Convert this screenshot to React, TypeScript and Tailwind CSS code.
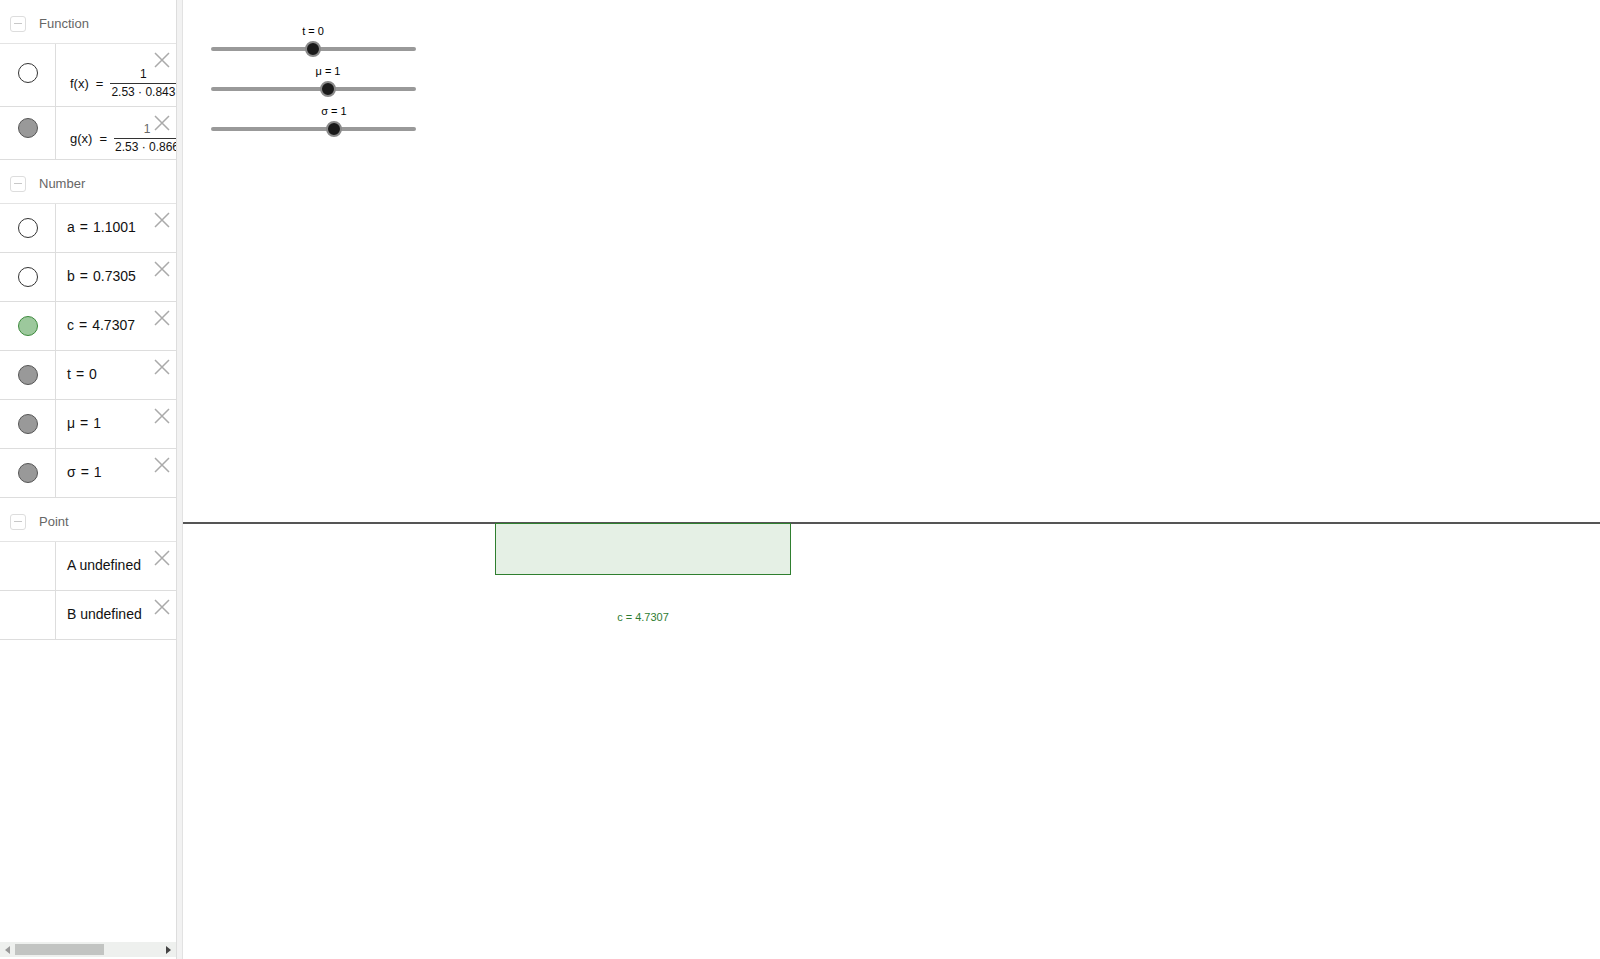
import type { ReactNode } from 'react';

const font = { fontFamily: '"Liberation Sans", Arial, sans-serif' };

function CloseX() {
  return (
    <svg className="absolute right-[6px] top-[8px]" width="16" height="16" viewBox="0 0 16 16">
      <path d="M1 1 L15 15 M15 1 L1 15" stroke="#aaaaaa" strokeWidth="1.5" fill="none" />
    </svg>
  );
}

type Dot = 'empty' | 'gray' | 'green' | 'none';

function Marble({ kind }: { kind: Dot }) {
  if (kind === 'none') return null;
  const cls =
    kind === 'empty'
      ? 'bg-white border-[#333]'
      : kind === 'gray'
        ? 'bg-[#999999] border-[#555]'
        : 'bg-[#9cc89c] border-[#3d8a3d]';
  return <div className={`w-[20px] h-[20px] rounded-full border ${cls}`} />;
}

function Header({ label }: { label: string }) {
  return (
    <div className="h-[44px] flex items-center pt-[4px] border-b border-[#e4e4e4] shrink-0">
      <div className="ml-[10px] w-[16px] h-[16px] rounded-[3px] border border-[#dddddd] flex items-center justify-center">
        <div className="w-[8px] h-[1.5px] bg-[#c8c8c8]" />
      </div>
      <span className="ml-[13px] text-[13px] text-[#666]">{label}</span>
    </div>
  );
}

function Row({
  h,
  dot,
  dotTop,
  children,
}: {
  h: string;
  dot: Dot;
  dotTop?: string;
  children: ReactNode;
}) {
  return (
    <div className={`${h} flex border-b border-[#dddddd] shrink-0`}>
      <div
        className={`w-[56px] shrink-0 border-r border-[#dddddd] flex justify-center ${dotTop ?? 'items-center'}`}
      >
        <Marble kind={dot} />
      </div>
      <div className="relative flex-1 overflow-hidden">
        {children}
        <CloseX />
      </div>
    </div>
  );
}

function Value({ name, value }: { name: string; value: string }) {
  return (
    <div className="h-full flex items-center pl-[11px] pb-[1px] text-[14px] text-[#111] whitespace-nowrap">
      <span>{name}</span>
      {value && (
        <>
          <span className="mx-[5px]">=</span>
          <span>{value}</span>
        </>
      )}
    </div>
  );
}

function Fraction({ name, den, top, numCls }: { name: string; den: string; top: string; numCls?: string }) {
  return (
    <div className={`absolute left-[14px] ${top} flex items-center whitespace-nowrap text-[#111]`}>
      <span className="text-[13px]">{name}</span>
      <span className="text-[13px] mx-[7px]">=</span>
      <div className="flex flex-col items-center text-[12px] leading-[13px]">
        <span className={`pb-[2px] ${numCls ?? ''}`}>1</span>
        <span className="border-t border-[#333] pt-[2px] px-[1px]">{den}</span>
      </div>
    </div>
  );
}

function Slider({ top, label, knob }: { top: string; label: string; knob: string }) {
  return (
    <div className={`absolute left-[28px] ${top} w-[205px] h-[40px]`}>
      <span className={`absolute top-0 -translate-x-1/2 text-[11px] leading-[16px] text-black whitespace-nowrap ${knob}`}>
        {label}
      </span>
      <div className="absolute left-0 right-0 top-[24px] h-[4px] rounded-full bg-[#999999]" />
      <div
        className={`absolute top-[18px] w-[16px] h-[16px] -translate-x-1/2 rounded-full bg-[#1a1a1a] border-[2px] border-[#8a8a8a] ${knob}`}
      />
    </div>
  );
}

export default function App() {
  return (
    <div className="w-[1600px] h-[959px] flex bg-white overflow-hidden" style={font}>
      {/* Algebra view */}
      <div className="w-[177px] shrink-0 flex flex-col border-r border-[#dddddd]">
        <div className="flex-1 flex flex-col overflow-hidden">
          <Header label="Function" />
          <Row h="h-[63px]" dot="empty" dotTop="items-start pt-[19px]">
            <Fraction name="f(x)" den="2.53 · 0.843" top="top-[24px]" />
          </Row>
          <Row h="h-[53px]" dot="gray" dotTop="items-start pt-[11px]">
            <Fraction name="g(x)" den="2.53 · 0.866" top="top-[16px]" numCls="text-[#666]" />
          </Row>
          <Header label="Number" />
          <Row h="h-[49px]" dot="empty"><Value name="a" value="1.1001" /></Row>
          <Row h="h-[49px]" dot="empty"><Value name="b" value="0.7305" /></Row>
          <Row h="h-[49px]" dot="green"><Value name="c" value="4.7307" /></Row>
          <Row h="h-[49px]" dot="gray"><Value name="t" value="0" /></Row>
          <Row h="h-[49px]" dot="gray"><Value name="μ" value="1" /></Row>
          <Row h="h-[49px]" dot="gray"><Value name="σ" value="1" /></Row>
          <Header label="Point" />
          <Row h="h-[49px]" dot="none"><Value name="A undefined" value="" /></Row>
          <Row h="h-[49px]" dot="none"><Value name="B undefined" value="" /></Row>
        </div>
        {/* horizontal scrollbar */}
        <div className="h-[15px] mb-[2px] bg-[#eef0ee] flex items-center relative shrink-0">
          <svg className="absolute left-[5px]" width="5" height="8" viewBox="0 0 5 8">
            <path d="M5 0 L0 4 L5 8 Z" fill="#999" />
          </svg>
          <div className="absolute left-[15px] w-[89px] h-[11px] bg-[#c2c4c2]" />
          <svg className="absolute right-[5px]" width="5" height="8" viewBox="0 0 5 8">
            <path d="M0 0 L5 4 L0 8 Z" fill="#444" />
          </svg>
        </div>
      </div>

      {/* splitter */}
      <div className="w-[6px] shrink-0 bg-[#f2f2f2] border-r border-[#e2e2e2]" />

      {/* Graphics view */}
      <div className="relative flex-1">
        <Slider top="top-[23px]" label="t = 0" knob="left-[102px]" />
        <Slider top="top-[63px]" label="μ = 1" knob="left-[117px]" />
        <Slider top="top-[103px]" label="σ = 1" knob="left-[123px]" />

        {/* x axis */}
        <div className="absolute left-0 right-0 top-[522px] h-[2px] bg-[#555555]" />

        {/* rectangle c */}
        <div className="absolute left-[312px] top-[523px] w-[296px] h-[52px] bg-[#e5f0e5] border-[1.5px] border-[#2f7f2f]" />
        <div className="absolute left-[460px] top-[609px] -translate-x-1/2 text-[11px] text-[#2e7d32] whitespace-nowrap">
          c = 4.7307
        </div>
      </div>
    </div>
  );
}
